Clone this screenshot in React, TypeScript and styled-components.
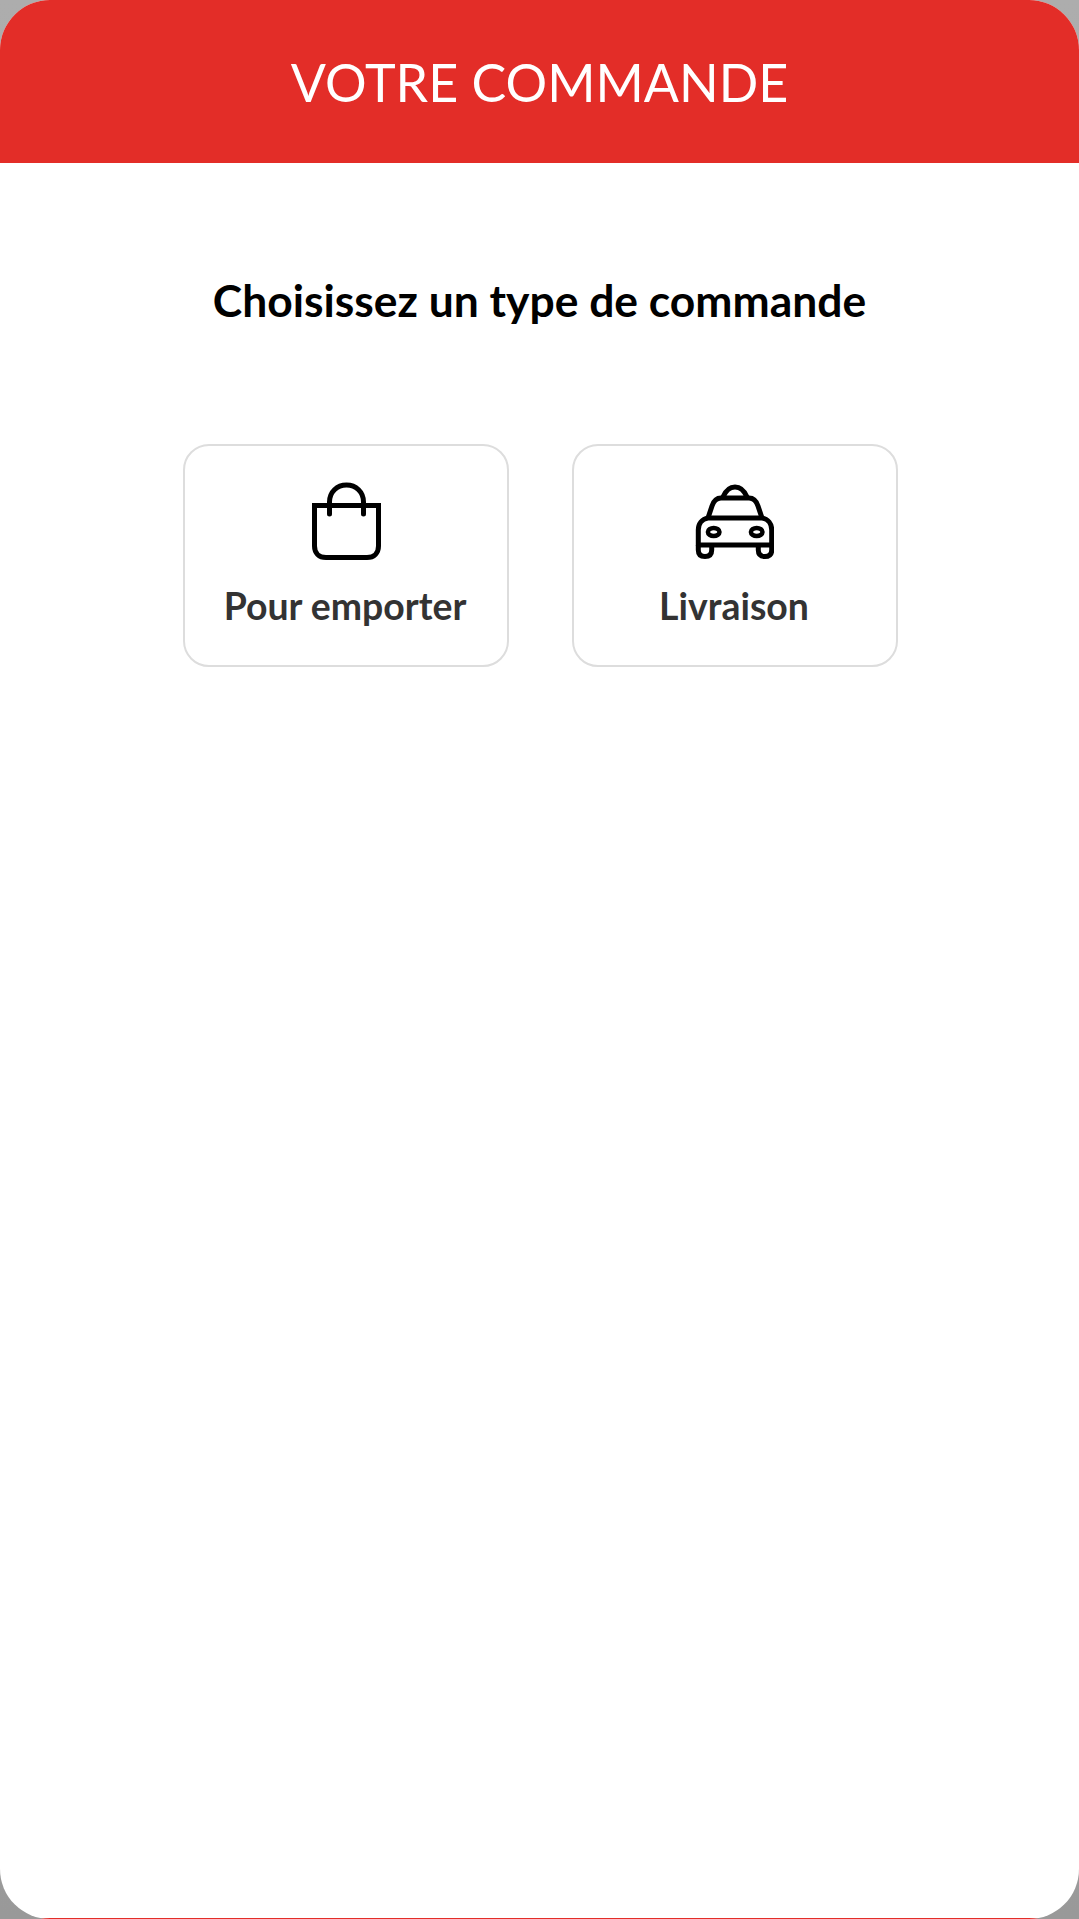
import React from "react";
import styled, { createGlobalStyle } from "styled-components";

const GlobalStyle = createGlobalStyle`
    html, body {
        margin: 0;
        padding: 0;
        background: linear-gradient(#adadad, #999);
    }
`;

const Screen = styled.div`
    width: 1079px;
    height: 1919px;
    display: flex;
    flex-direction: column;
    overflow: hidden;
    background: #fff;
    border-radius: 50px;
    font-family: Lato, "Liberation Sans", sans-serif;
`;

const Header = styled.header`
    height: 163px;
    flex: none;
    display: flex;
    align-items: center;
    justify-content: center;
    background: #e32d28;
    color: #fff;
    font-size: 52px;
    font-weight: 400;
`;

const Heading = styled.h1`
    margin: 110px 0 0;
    height: 54px;
    line-height: 54px;
    text-align: center;
    color: #000;
    font-size: 44.4px;
    font-weight: 700;
`;

const Options = styled.div`
    margin-top: 117px;
    padding-left: 2px;
    display: flex;
    justify-content: center;
    gap: 63px;
`;

const Option = styled.button`
    width: 326px;
    height: 223px;
    box-sizing: border-box;
    padding: 35px 2px 0 0;
    display: flex;
    flex-direction: column;
    align-items: center;
    background: #fff;
    border: 2px solid #ddd;
    border-radius: 26px;
    font-family: inherit;
`;

const IconSlot = styled.svg`
    display: block;
    width: 80px;
    height: 80px;
    fill: none;
    stroke: #000;
    stroke-width: 5px;
`;

const OptionLabel = styled.span`
    margin-top: 23px;
    color: #333;
    font-size: 37.4px;
    font-weight: 700;
    line-height: 44px;
`;

const BottomEdge = styled.div`
    margin-top: auto;
    height: 1px;
    flex: none;
    background: #e32d28;
`;

const BagIcon = () => (
    <IconSlot viewBox="-2 0 80 80">
        <path d="M7.5 24.5H71.5V65C71.5 72 67 76.5 60 76.5H19C12 76.5 7.5 72 7.5 65Z" />
        <path d="M22.5 33V21C22.5 11 30 4 39.5 4S56.5 11 56.5 21V33" strokeLinecap="round" />
    </IconSlot>
);

const CarIcon = () => (
    <IconSlot viewBox="-2 0 80 80">
        <path d="M27 16C30 9 34 6 39 6S48 9 51 16" />
        <path d="M12 37L16 25C18 19 21 17 25 17H53C57 17 60 19 62 25L66 37" />
        <path d="M12 37H66C72 38 75.7 43 75.7 49V64H2.3V49C2.3 43 6 38 12 37Z" strokeLinejoin="round" />
        <path d="M2.3 64V69C2.3 73 4.5 75.5 9 75.5S15.7 73 15.7 69V64M62.3 64V69C62.3 73 64.5 75.5 69 75.5S75.7 73 75.7 69V64" />
        <ellipse cx="17.7" cy="51" rx="5.8" ry="4" strokeWidth="4.5" />
        <ellipse cx="60.7" cy="51" rx="5.8" ry="4" strokeWidth="4.5" />
    </IconSlot>
);

export default function App() {
    return (
        <>
            <GlobalStyle />
            <Screen>
                <Header>VOTRE COMMANDE</Header>
                <Heading>Choisissez un type de commande</Heading>
                <Options>
                    <Option type="button">
                        <BagIcon />
                        <OptionLabel>Pour emporter</OptionLabel>
                    </Option>
                    <Option type="button">
                        <CarIcon />
                        <OptionLabel>Livraison</OptionLabel>
                    </Option>
                </Options>
                <BottomEdge />
            </Screen>
        </>
    );
}
